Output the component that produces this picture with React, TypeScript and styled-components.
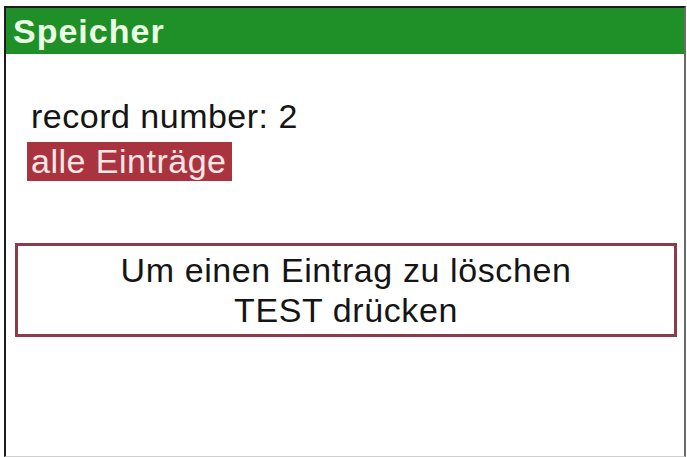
import React from "react";
import styled, { createGlobalStyle } from "styled-components";

const Global = createGlobalStyle`
  html, body { margin: 0; padding: 0; background: #ffffff; }
  body { font-family: "Liberation Sans", Arial, sans-serif; }
`;

const Page = styled.div`
  width: 687px;
  height: 457px;
  padding: 6px 1px 0 4px;
  box-sizing: border-box;
  background: #ffffff;
`;

const Frame = styled.div`
  display: flex;
  flex-direction: column;
  height: 451px;
  box-sizing: border-box;
  border-top: 2px solid #1c1c1c;
  border-left: 2px solid #1c1c1c;
  border-right: 2px solid #6a6a6a;
  border-bottom: 1px solid #cfcfcf;
`;

const Header = styled.div`
  height: 46px;
  background: #1f8f27;
  color: #eaffe4;
  font-size: 34px;
  font-weight: 700;
  letter-spacing: 1px;
  line-height: 46px;
  padding-left: 7px;
  box-sizing: border-box;
`;

const Body = styled.div`
  display: flex;
  flex-direction: column;
  align-items: flex-start;
  padding: 43px 7px 0 9px;
`;

const Line = styled.div`
  font-size: 34px;
  letter-spacing: 0.5px;
  line-height: 38px;
  color: #151515;
  padding-left: 16px;
`;

const Highlight = styled.div`
  margin: 7px 0 0 12px;
  height: 39px;
  width: 205px;
  box-sizing: border-box;
  background: #a93440;
  color: #fde6e6;
  font-size: 34px;
  letter-spacing: 0.5px;
  line-height: 39px;
  padding-left: 4px;
  white-space: nowrap;
`;

const MessageBox = styled.div`
  align-self: stretch;
  margin-top: 62px;
  border: 3px solid #8c3b4a;
  padding: 4px 0;
  text-align: center;
  font-size: 34px;
  letter-spacing: 0.6px;
  line-height: 40px;
  color: #151515;
`;

export default function App() {
  return (
    <>
      <Global />
      <Page>
        <Frame>
          <Header>Speicher</Header>
          <Body>
            <Line>record number: 2</Line>
            <Highlight>alle Einträge</Highlight>
            <MessageBox>
              Um einen Eintrag zu löschen
              <br />
              TEST drücken
            </MessageBox>
          </Body>
        </Frame>
      </Page>
    </>
  );
}
